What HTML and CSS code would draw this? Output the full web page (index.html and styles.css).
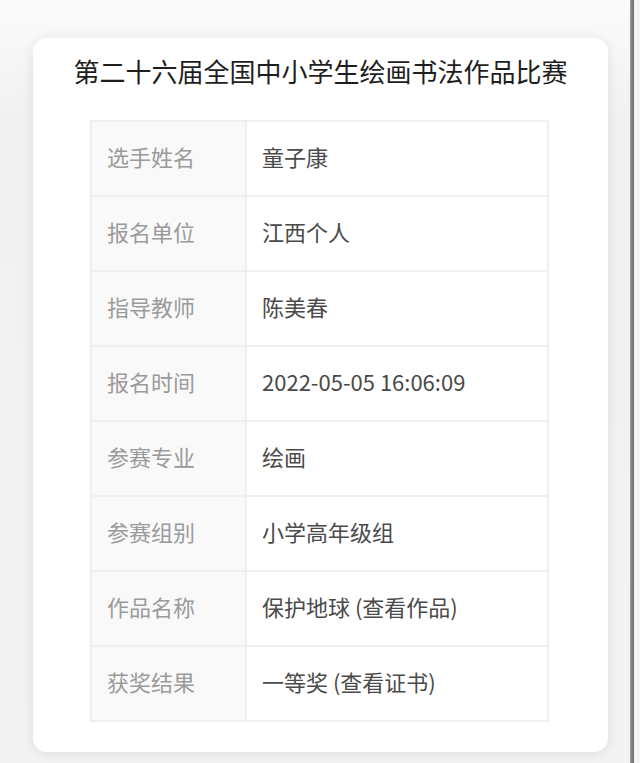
FILE: index.html
```html
<!DOCTYPE html>
<html lang="zh-CN">
<head>
<meta charset="utf-8">
<link rel="stylesheet" href="styles.css">
</head>
<body>
<div class="page">
  <main class="stage">
    <section class="card">
      <h1 class="title">第二十六届全国中小学生绘画书法作品比赛</h1>
      <table class="info">
        <tr><th>选手姓名</th><td>童子康</td></tr>
        <tr><th>报名单位</th><td>江西个人</td></tr>
        <tr><th>指导教师</th><td>陈美春</td></tr>
        <tr><th>报名时间</th><td>2022-05-05 16:06:09</td></tr>
        <tr><th>参赛专业</th><td>绘画</td></tr>
        <tr><th>参赛组别</th><td>小学高年级组</td></tr>
        <tr><th>作品名称</th><td>保护地球 (查看作品)</td></tr>
        <tr><th>获奖结果</th><td>一等奖 (查看证书)</td></tr>
      </table>
    </section>
  </main>
  <div class="edge"></div>
  <div class="rest"></div>
</div>
</body>
</html>
```

FILE: styles.css
```css
html, body {
  margin: 0;
  padding: 0;
}
body {
  width: 640px;
  height: 763px;
  overflow: hidden;
  background: #f3f3f3;
  font-family: "Noto Sans CJK SC", "Noto Sans", sans-serif;
}
.page {
  display: flex;
  height: 763px;
}
.stage {
  width: 630px;
  padding: 38px 0 0 33px;
  box-sizing: border-box;
  background: linear-gradient(#fbfbfb, #f1f1f1 120px, #f3f3f3);
}
.card {
  width: 575px;
  height: 714px;
  box-sizing: border-box;
  background: #ffffff;
  border-radius: 14px;
  box-shadow: 0 2px 14px rgba(0, 0, 0, 0.09);
  padding: 11px 0 0 57px;
}
.title {
  margin: 0 0 27px -57px;
  width: 575px;
  text-align: center;
  font-size: 26px;
  line-height: 44px;
  font-weight: 400;
  color: #1e1e1e;
}
.info {
  border-collapse: collapse;
  width: 459px;
  table-layout: fixed;
}
.info th,
.info td {
  height: 75px;
  padding: 0 0 6px 15px;
  border: 2px solid #efefef;
  font-size: 22px;
  font-weight: 400;
  text-align: left;
  box-sizing: border-box;
}
.info th {
  width: 155px;
  background: #f9f9f9;
  color: #9a9a9a;
}
.info td {
  color: #4a4a4a;
  background: #ffffff;
}
.edge {
  width: 4px;
  background: linear-gradient(90deg, #9a9a9a, #6a6a6a);
}
.rest {
  flex: 1;
  background: #f4f4f4;
}
```
